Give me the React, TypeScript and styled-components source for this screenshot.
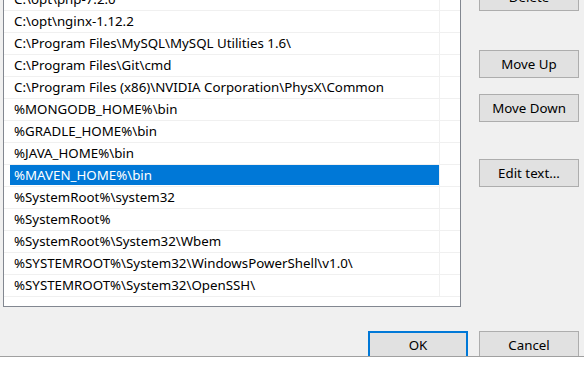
import React from 'react';
import styled, { createGlobalStyle } from 'styled-components';

const GlobalStyle = createGlobalStyle`
  html, body {
    margin: 0;
    padding: 0;
    background: #ffffff;
  }
  body {
    font-family: 'Noto Sans', 'Open Sans', sans-serif;
    font-size: 13.3px;
    color: #000000;
  }
`;

const paths = [
  'C:\\opt\\php-7.2.0',
  'C:\\opt\\nginx-1.12.2',
  'C:\\Program Files\\MySQL\\MySQL Utilities 1.6\\',
  'C:\\Program Files\\Git\\cmd',
  'C:\\Program Files (x86)\\NVIDIA Corporation\\PhysX\\Common',
  '%MONGODB_HOME%\\bin',
  '%GRADLE_HOME%\\bin',
  '%JAVA_HOME%\\bin',
  '%MAVEN_HOME%\\bin',
  '%SystemRoot%\\system32',
  '%SystemRoot%',
  '%SystemRoot%\\System32\\Wbem',
  '%SYSTEMROOT%\\System32\\WindowsPowerShell\\v1.0\\',
  '%SYSTEMROOT%\\System32\\OpenSSH\\',
];

const selectedIndex = 8;

const Dialog = styled.div`
  height: 357px;
  box-sizing: border-box;
  background: #f0f0f0;
  border-bottom: 1px solid #a0a0a0;
  overflow: hidden;
  display: flex;
  flex-direction: column;
`;

const Main = styled.div`
  display: flex;
  align-items: flex-start;
  padding-left: 3px;
  gap: 18px;
`;

const PathList = styled.div`
  margin-top: -12px;
  width: 458px;
  height: 319px;
  box-sizing: border-box;
  background: #ffffff;
  border: 1px solid #828790;
`;

const Row = styled.div`
  display: flex;
  height: 22px;
  box-sizing: border-box;
  border-bottom: 1px solid #f0f0f0;
`;

const NameCell = styled.div`
  width: 436px;
  box-sizing: border-box;
  padding-left: 6px;
  border-right: 1px solid #f0f0f0;
`;

const Label = styled.div<{ $selected: boolean }>`
  height: 20px;
  line-height: 21px;
  padding-left: 4px;
  white-space: nowrap;
  overflow: hidden;
  background: ${(p) => (p.$selected ? '#0078d7' : 'transparent')};
  color: ${(p) => (p.$selected ? '#ffffff' : '#000000')};
`;

const ButtonColumn = styled.div`
  margin-top: -17px;
  display: flex;
  flex-direction: column;
  width: 100px;
`;

const Button = styled.button<{ $gap?: number; $default?: boolean }>`
  margin-top: ${(p) => p.$gap ?? 0}px;
  width: 100px;
  height: 28px;
  box-sizing: border-box;
  padding: 0;
  font-family: inherit;
  font-size: 13.3px;
  color: #000000;
  background: #e1e1e1;
  border: 1px solid #adadad;
  box-shadow: ${(p) => (p.$default ? 'inset 0 0 0 1px #0078d7' : 'none')};
  border-color: ${(p) => (p.$default ? '#0078d7' : '#adadad')};
`;

const Footer = styled.div`
  display: flex;
  justify-content: flex-end;
  gap: 11px;
  padding-right: 5px;
  margin-top: 24px;
`;

const App: React.FC = () => {
  return (
    <>
      <GlobalStyle />
      <Dialog>
        <Main>
          <PathList>
            {paths.map((path, i) => (
              <Row key={path}>
                <NameCell>
                  <Label $selected={i === selectedIndex}>{path}</Label>
                </NameCell>
              </Row>
            ))}
          </PathList>
          <ButtonColumn>
            <Button>Delete</Button>
            <Button $gap={39}>Move Up</Button>
            <Button $gap={16}>Move Down</Button>
            <Button $gap={37}>Edit text...</Button>
          </ButtonColumn>
        </Main>
        <Footer>
          <Button $default>OK</Button>
          <Button>Cancel</Button>
        </Footer>
      </Dialog>
    </>
  );
};

export default App;
